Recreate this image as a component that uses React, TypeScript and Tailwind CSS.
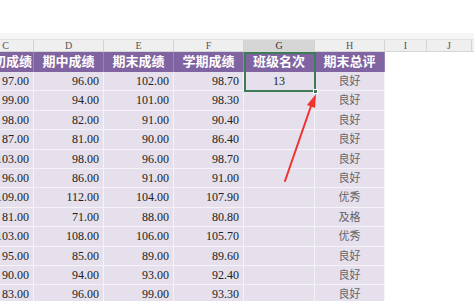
import React from "react";

const C = ["97.00","99.00","98.00","87.00","103.00","96.00","109.00","81.00","103.00","95.00","90.00","83.00"];
const D = ["96.00","94.00","82.00","81.00","98.00","86.00","112.00","71.00","108.00","85.00","94.00","96.00"];
const E = ["102.00","101.00","91.00","90.00","96.00","91.00","104.00","88.00","106.00","89.00","93.00","99.00"];
const F = ["98.70","98.30","90.40","86.40","98.70","91.00","107.90","80.80","105.70","89.60","92.40","93.30"];
const G = ["13","","","","","","","","","","",""];
const H = ["良好","良好","良好","良好","良好","良好","优秀","及格","优秀","良好","良好","良好"];

const font = { fontFamily: '"Liberation Serif", "Noto Sans CJK SC", serif' };

export default function App() {
  return (
    <div className="relative w-[474px] h-[301px] overflow-hidden bg-white" style={font}>
      <div className="h-[33px] bg-white" />
      <div className="h-[7px] bg-[#f6f6f6] border-b border-[#e2e2e2]" />
      <div className="ml-[-22px] flex flex-col">
        {/* column letters */}
        <div className="flex h-[12px] bg-[#efefef] text-[10px] leading-[12px] text-[#555] border-b border-[#d4d4d4]">
          <div className="w-[56px] border-r border-[#d4d4d4] text-center">C</div>
          <div className="w-[70px] border-r border-[#d4d4d4] text-center">D</div>
          <div className="w-[70px] border-r border-[#d4d4d4] text-center">E</div>
          <div className="w-[70px] border-r border-[#d4d4d4] text-center">F</div>
          <div className="w-[71px] border-r border-[#d4d4d4] text-center bg-[#d6d6d6] text-[#333]">G</div>
          <div className="w-[70px] border-r border-[#d4d4d4] text-center">H</div>
          <div className="w-[42px] border-r border-[#d4d4d4] text-center">I</div>
          <div className="w-[45px] border-r border-[#d4d4d4] text-center">J</div>
          <div className="flex-1" />
        </div>
        {/* purple header */}
        <div className="flex h-[20px] text-[13px] leading-[20px] font-bold text-white">
          <div className="w-[56px] bg-[#8064a2] border-r border-[#9a82b8] text-right pr-[1px] whitespace-nowrap overflow-hidden">期初成绩</div>
          <div className="w-[70px] bg-[#8064a2] border-r border-[#9a82b8] text-center">期中成绩</div>
          <div className="w-[70px] bg-[#8064a2] border-r border-[#9a82b8] text-center">期末成绩</div>
          <div className="w-[70px] bg-[#8064a2] border-r border-[#9a82b8] text-center">学期成绩</div>
          <div className="w-[71px] bg-[#8064a2] border-r border-[#9a82b8] text-center">班级名次</div>
          <div className="w-[70px] bg-[#8064a2] border-r border-[#9a82b8] text-center">期末总评</div>
          <div className="flex-1 bg-white" />
        </div>
        {C.map((c, i) => (
          <div key={i} className="flex h-[19.4px] text-[12px] leading-[19px] text-[#222]">
            <div className="w-[56px] bg-[#e5e0ec] border-r border-b border-[#f5f3f8] text-right pr-[4px]">{c}</div>
            <div className="w-[70px] bg-[#e5e0ec] border-r border-b border-[#f5f3f8] text-right pr-[4px]">{D[i]}</div>
            <div className="w-[70px] bg-[#e5e0ec] border-r border-b border-[#f5f3f8] text-right pr-[4px]">{E[i]}</div>
            <div className="w-[70px] bg-[#e5e0ec] border-r border-b border-[#f5f3f8] text-right pr-[4px]">{F[i]}</div>
            <div className="w-[71px] bg-[#e5e0ec] border-r border-b border-[#f5f3f8] text-center">{G[i]}</div>
            <div className="w-[70px] bg-[#e5e0ec] border-r border-b border-[#f5f3f8] text-center text-[11px] text-[#666]">{H[i]}</div>
            <div className="flex-1 bg-white" />
          </div>
        ))}
      </div>
      {/* selection */}
      <div className="absolute left-[244px] top-[52px] w-[72px] h-[40px] border-2 border-[#3d7a55]" />
      <div className="absolute left-[313px] top-[89px] w-[5px] h-[5px] bg-[#3d7a55] border border-white" />
      {/* arrow */}
      <svg className="absolute left-0 top-0" width="474" height="301" viewBox="0 0 474 301">
        <line x1="285" y1="181" x2="311" y2="106" stroke="#f0332e" strokeWidth="2" strokeLinecap="round" />
        <polygon points="316,94 307,105 315,108" fill="#f0332e" />
      </svg>
    </div>
  );
}
